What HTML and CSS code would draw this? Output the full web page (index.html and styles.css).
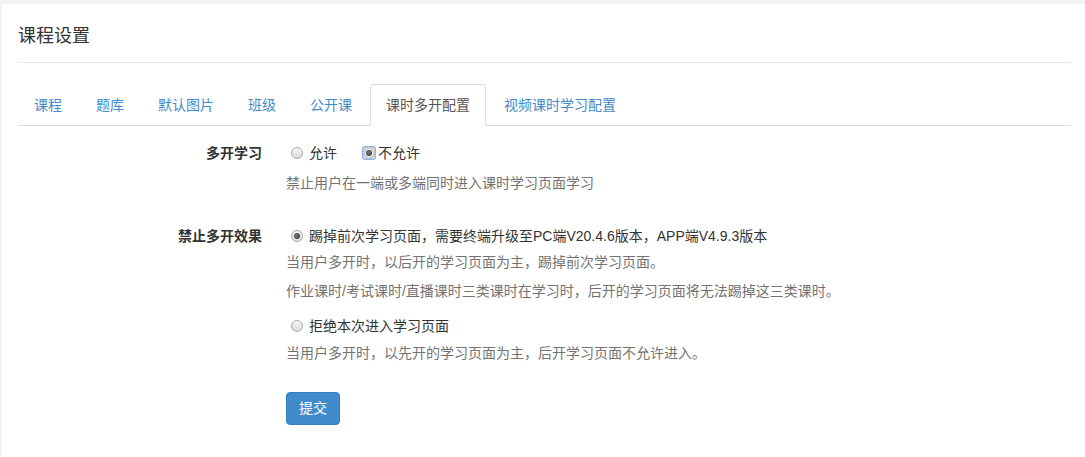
FILE: index.html
```html
<!DOCTYPE html>
<html lang="zh-CN">

<head>
    <meta charset="UTF-8">
    <meta name="viewport" content="width=device-width, initial-scale=1.0">
    <title>课程设置</title>
    <link rel="stylesheet" href="styles.css">
</head>

<body>

    <div class="panel">
        <h1 class="page-title">课程设置</h1>

        <ul class="nav-tabs">
            <li><a href="#">课程</a></li>
            <li><a href="#">题库</a></li>
            <li><a href="#">默认图片</a></li>
            <li><a href="#">班级</a></li>
            <li><a href="#">公开课</a></li>
            <li class="active"><a href="#">课时多开配置</a></li>
            <li><a href="#">视频课时学习配置</a></li>
        </ul>

        <form class="settings-form">
            <div class="form-row row-multi">
                <label class="control-label">多开学习</label>
                <div class="controls">
                    <div class="radio-line">
                        <label class="radio-inline"><span class="radio"></span>允许</label>
                        <label class="radio-inline"><span class="radio checked focused"></span>不允许</label>
                    </div>
                    <p class="help-block help-first">禁止用户在一端或多端同时进入课时学习页面学习</p>
                </div>
            </div>

            <div class="form-row row-effect">
                <label class="control-label">禁止多开效果</label>
                <div class="controls">
                    <div class="radio-line">
                        <label class="radio-inline"><span class="radio checked"></span>踢掉前次学习页面，需要终端升级至PC端V20.4.6版本，APP端V4.9.3版本</label>
                    </div>
                    <p class="help-block help-kick">当用户多开时，以后开的学习页面为主，踢掉前次学习页面。</p>
                    <p class="help-block help-note">作业课时/考试课时/直播课时三类课时在学习时，后开的学习页面将无法踢掉这三类课时。</p>

                    <div class="radio-line radio-second">
                        <label class="radio-inline"><span class="radio"></span>拒绝本次进入学习页面</label>
                    </div>
                    <p class="help-block help-refuse">当用户多开时，以先开的学习页面为主，后开学习页面不允许进入。</p>

                    <button type="button" class="btn-primary">提交</button>
                </div>
            </div>
        </form>
    </div>

</body>

</html>
```

FILE: styles.css
```css
body {
    margin: 0;
    font-family: 'Liberation Sans', 'Noto Sans CJK SC', sans-serif;
    font-size: 14px;
    line-height: 20px;
    color: #333;
    background-color: #f3f3f3;
}

.panel {
    margin: 4px 0 0 2px;
    padding: 0 14px 0 16px;
    min-height: calc(100vh - 4px);
    background-color: #fff;
    box-sizing: border-box;
}

.page-title {
    margin: 0;
    padding: 20px 0 14px;
    font-size: 18px;
    font-weight: normal;
    line-height: 24px;
    color: #333;
    border-bottom: 1px solid #e8e8e8;
}

.nav-tabs {
    list-style: none;
    margin: 21px 0 0;
    padding: 0;
    display: flex;
    border-bottom: 1px solid #ddd;
}

.nav-tabs li {
    margin: 0 2px -1px 0;
}

.nav-tabs li a {
    display: block;
    padding: 10px 15px;
    border: 1px solid transparent;
    border-radius: 4px 4px 0 0;
    color: #428bca;
    text-decoration: none;
}

.nav-tabs li.active a {
    color: #555;
    background-color: #fff;
    border-color: #ddd #ddd transparent;
}

.settings-form {
    padding-top: 17px;
}

.form-row {
    display: grid;
    grid-template-columns: 244px 1fr;
    column-gap: 24px;
}

.row-effect {
    margin-top: 33px;
}

.control-label {
    text-align: right;
    font-weight: bold;
}

.radio-line {
    display: flex;
    padding-left: 5px;
}

.radio-inline {
    display: inline-flex;
    align-items: center;
    margin-right: 26px;
}

.radio {
    position: relative;
    width: 12px;
    height: 12px;
    margin-right: 6px;
    border-radius: 50%;
    border: 1px solid #a9a9a9;
    background: linear-gradient(#f4f4f4, #dcdcdc);
    box-sizing: border-box;
}

.radio.checked::after {
    content: '';
    position: absolute;
    left: 2px;
    top: 2px;
    width: 6px;
    height: 6px;
    border-radius: 50%;
    background: radial-gradient(circle at 40% 40%, #777, #333);
}

.radio.focused {
    margin-right: 3px;
    outline: 1px solid #8ab4f0;
    box-shadow: 0 0 0 1px #bcd3f5;
    border-radius: 2px;
    background: radial-gradient(circle, #dcdcdc 0, #e6e6e6 4px, #bbb 5px, #eee 6px);
    border-color: #c8c8c8;
}

.help-block {
    margin: 0;
    color: #737373;
}

.help-first {
    margin-top: 10px;
}

.help-kick {
    margin-top: 6px;
}

.help-note {
    margin-top: 9px;
}

.radio-second {
    margin-top: 15px;
}

.help-refuse {
    margin-top: 7px;
}

.btn-primary {
    margin-top: 29px;
    padding: 6px 12px;
    font-family: inherit;
    font-size: 14px;
    line-height: 19px;
    color: #fff;
    background-color: #428bca;
    border: 1px solid #357ebd;
    border-radius: 4px;
    cursor: pointer;
}

.btn-primary:hover {
    background-color: #3276b1;
}
```
